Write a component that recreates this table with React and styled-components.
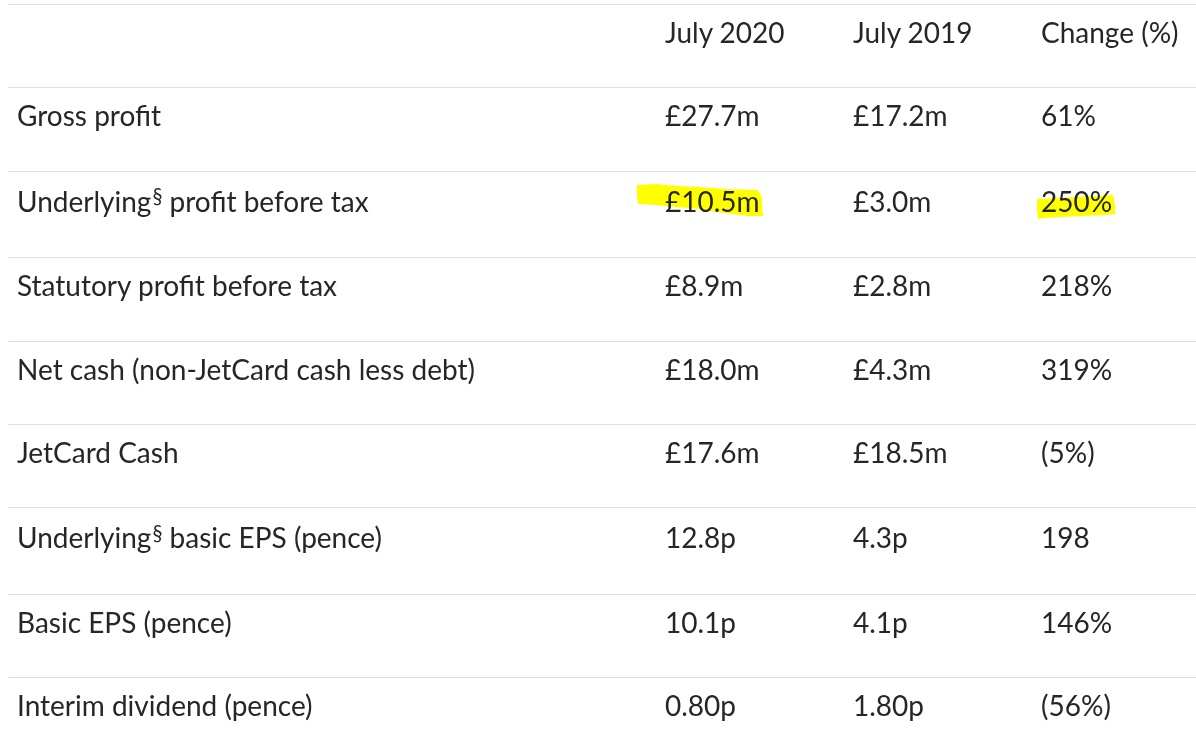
import React from "react";
import styled, { createGlobalStyle } from "styled-components";

const GlobalStyle = createGlobalStyle`
  html, body {
    margin: 0;
    padding: 0;
    background: #ffffff;
    overflow: hidden;
  }
  body {
    font-family: Lato, "Open Sans", "Liberation Sans", sans-serif;
  }
`;

const Page = styled.div`
  padding: 4px 0 0 8px;
`;

const Table = styled.table`
  width: 1188px;
  border-collapse: collapse;
  table-layout: fixed;
  font-family: Lato, "Liberation Sans", sans-serif;
  font-size: 28px;
  color: #262626;
`;

const Row = styled.tr`
  border-top: 1px solid #dcdfec;
  & > td,
  & > th {
    padding-top: ${(p) => (p.$tall ? "12px" : "10px")};
    padding-bottom: ${(p) => (p.$tall ? "39.5px" : "38px")};
  }
`;

const Cell = styled.td`
  box-sizing: border-box;
  position: relative;
  padding-left: 9px;
  padding-right: 9px;
  line-height: 34.3px;
  vertical-align: top;
  text-align: left;
  font-weight: 400;
  white-space: nowrap;
`;

const Sup = styled.sup`
  font-size: 0.72em;
  vertical-align: 0.42em;
  line-height: 0;
  margin-left: 1px;
`;

const Mark = styled.svg`
  position: absolute;
  left: ${(p) => p.$left}px;
  top: ${(p) => p.$top}px;
  mix-blend-mode: multiply;
  pointer-events: none;
  overflow: visible;
`;

const Highlight = ({ left, top, width, height, d }) => (
  <Mark $left={left} $top={top} width={width} height={height} viewBox={`0 0 ${width} ${height}`}>
    <path d={d} fill="#ffff00" />
  </Mark>
);

const rows = [
  { label: "Gross profit", a: "£27.7m", b: "£17.2m", c: "61%" },
  {
    label: ["Underlying", "§", " profit before tax"],
    a: "£10.5m",
    b: "£3.0m",
    c: "250%",
    hlA: {
      left: -20,
      top: 10,
      width: 130,
      height: 40,
      d: "M1 3 L20 2 L40 4 L64 5 L90 7 L122 8 L124 12 L126 16 L126 24 L127 34 L112 34 L97 32 L80 30 L64 27 L40 25 L20 23 L2 22 L1 14 Z",
    },
    hlC: {
      left: 0,
      top: 20,
      width: 90,
      height: 30,
      d: "M5 7 L25 6 L45 5 L65 4 L81 3 L82 8 L83 14 L83 22 L70 23 L50 24 L30 25 L12 26 L6 27 L5 18 Z",
    },
  },
  { label: "Statutory profit before tax", a: "£8.9m", b: "£2.8m", c: "218%" },
  { label: "Net cash (non-JetCard cash less debt)", a: "£18.0m", b: "£4.3m", c: "319%" },
  { label: "JetCard Cash", a: "£17.6m", b: "£18.5m", c: "(5%)" },
  { label: ["Underlying", "§", " basic EPS (pence)"], a: "12.8p", b: "4.3p", c: "198" },
  { label: "Basic EPS (pence)", a: "10.1p", b: "4.1p", c: "146%" },
  { label: "Interim dividend (pence)", a: "0.80p", b: "1.80p", c: "(56%)" },
];

const Label = ({ label }) =>
  Array.isArray(label) ? (
    <>
      {label[0]}
      <Sup>{label[1]}</Sup>
      {label[2]}
    </>
  ) : (
    label
  );

export default function App() {
  return (
    <>
      <GlobalStyle />
      <Page>
        <Table>
          <colgroup>
            <col style={{ width: 648 }} />
            <col style={{ width: 188 }} />
            <col style={{ width: 188 }} />
            <col />
          </colgroup>
          <thead>
            <Row>
              <Cell as="th"></Cell>
              <Cell as="th">July 2020</Cell>
              <Cell as="th">July 2019</Cell>
              <Cell as="th">Change (%)</Cell>
            </Row>
          </thead>
          <tbody>
            {rows.map((r, i) => (
              <Row key={i} $tall={Array.isArray(r.label)}>
                <Cell>
                  <Label label={r.label} />
                </Cell>
                <Cell>
                  {r.hlA && <Highlight {...r.hlA} />}
                  {r.a}
                </Cell>
                <Cell>{r.b}</Cell>
                <Cell>
                  {r.hlC && <Highlight {...r.hlC} />}
                  {r.c}
                </Cell>
              </Row>
            ))}
          </tbody>
        </Table>
      </Page>
    </>
  );
}
